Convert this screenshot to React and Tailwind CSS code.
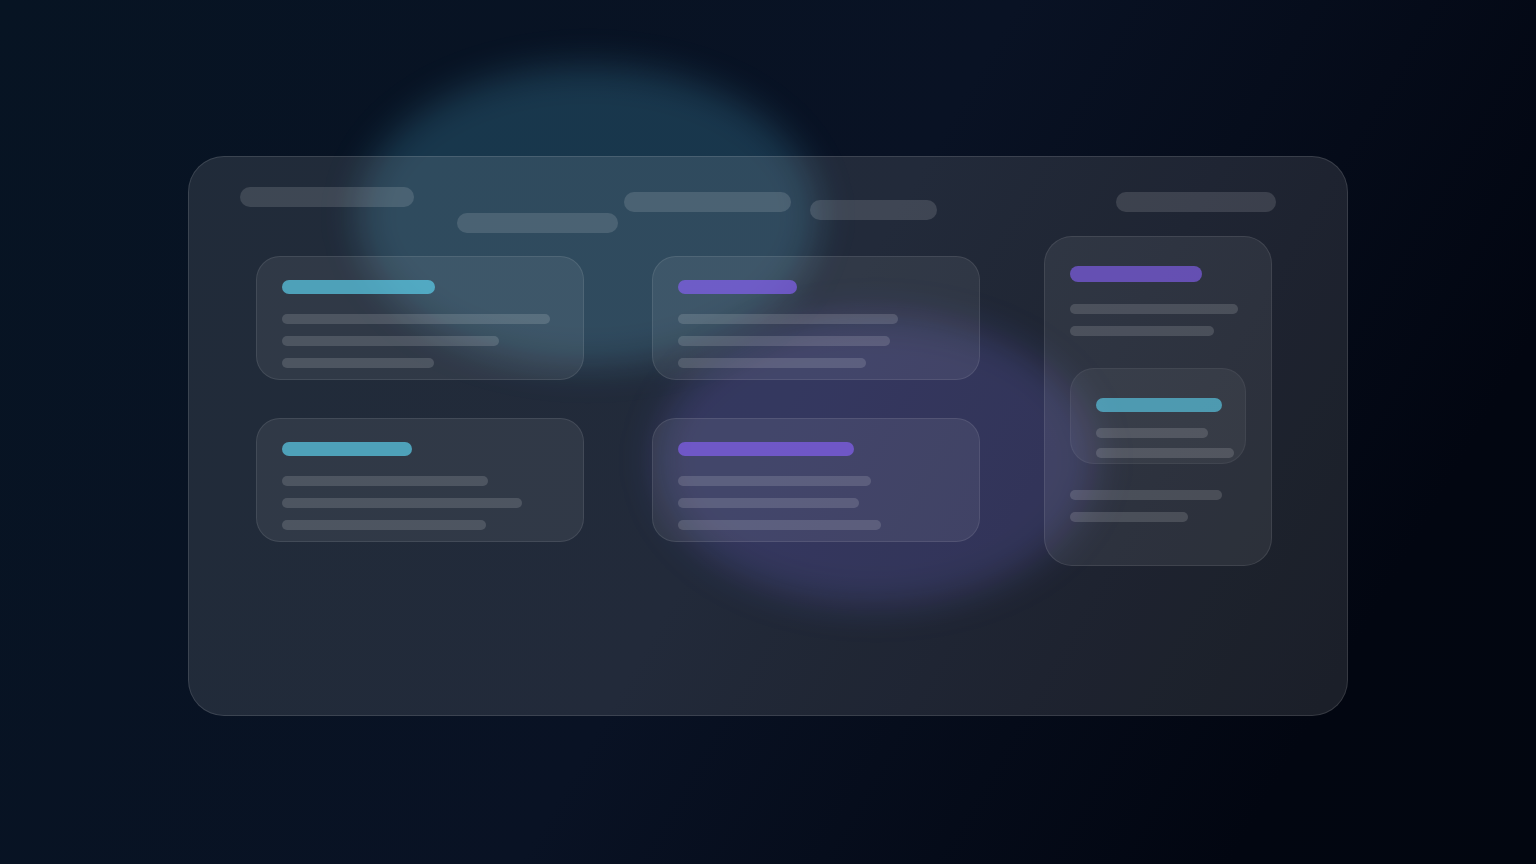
const headerPills = [
  { width: 174, className: "" },
  { width: 161, className: "ml-[43px] mt-[26px]" },
  { width: 167, className: "ml-[6px] mt-[5px]" },
  { width: 127, className: "ml-[19px] mt-[13px]" },
  { width: 160, className: "ml-auto mt-[5px]" },
];

const cards = [
  { accent: "cyan", title: 153, lines: [268, 217, 152] },
  { accent: "violet", title: 119, lines: [220, 212, 188] },
  { accent: "cyan", title: 130, lines: [206, 240, 204] },
  { accent: "violet", title: 176, lines: [193, 181, 203] },
];

const accents = {
  cyan: "bg-[#5bcde9]/70",
  violet: "bg-[#8360f0]/70",
};

function Line({ width }) {
  return <div className="h-[10px] rounded-full bg-white/14" style={{ width }} />;
}

function Card({ accent, title, lines }) {
  return (
    <article className="rounded-3xl border border-white/9 bg-white/7 pt-[23px] pb-[11px] pl-[25px]">
      <div className={`h-[14px] rounded-full ${accents[accent]}`} style={{ width: title }} />
      <div className="mt-5 flex flex-col gap-3">
        {lines.map((width, i) => (
          <Line key={i} width={width} />
        ))}
      </div>
    </article>
  );
}

function Sidebar() {
  return (
    <aside className="ml-16 w-[228px] shrink-0 rounded-[28px] border border-white/9 bg-white/7 px-[25px] pt-[29px] pb-[43px]">
      <div className="h-4 w-[132px] rounded-full bg-[#8360f0]/65" />
      <div className="mt-[22px] flex flex-col gap-3">
        <Line width={168} />
        <Line width={144} />
      </div>

      <div className="mt-8 rounded-3xl border border-white/5 bg-white/5 pt-[29px] pb-[5px] pl-[25px]">
        <div className="h-[14px] w-[126px] rounded-full bg-[#5bcde9]/65" />
        <div className="mt-4 flex flex-col gap-[10px]">
          <Line width={112} />
          <Line width={138} />
        </div>
      </div>

      <div className="mt-[26px] flex flex-col gap-3">
        <Line width={152} />
        <Line width={118} />
      </div>
    </aside>
  );
}

export default function App() {
  return (
    <main className="flex min-h-screen items-center justify-center overflow-hidden bg-[linear-gradient(120deg,#071423_0%,#091224_50%,#020611_85%,#020610_100%)] pt-2">
      <div className="relative w-full max-w-[1160px]">
        {/* glow behind the glass */}
        <div className="absolute -top-[90px] left-[170px] h-[300px] w-[460px] rounded-[50%] bg-[#5bc8f0]/20 blur-[18px]" />
        <div className="absolute top-[159px] left-[468px] h-[290px] w-[440px] rounded-[50%] bg-[#7462f5]/20 blur-[18px]" />

        <section className="relative rounded-[36px] border border-white/12 bg-white/10 pt-[30px] pb-[149px]">
          <header className="flex h-[49px] items-start pr-[71px] pl-[51px]">
            {headerPills.map((pill, i) => (
              <div
                key={i}
                className={`h-5 rounded-full bg-white/13 ${pill.className}`}
                style={{ width: pill.width }}
              />
            ))}
          </header>

          <div className="flex items-start pr-[75px] pl-[67px]">
            <div className="mt-5 grid flex-1 grid-cols-2 gap-x-[68px] gap-y-[38px]">
              {cards.map((card, i) => (
                <Card key={i} {...card} />
              ))}
            </div>
            <Sidebar />
          </div>
        </section>
      </div>
    </main>
  );
}
